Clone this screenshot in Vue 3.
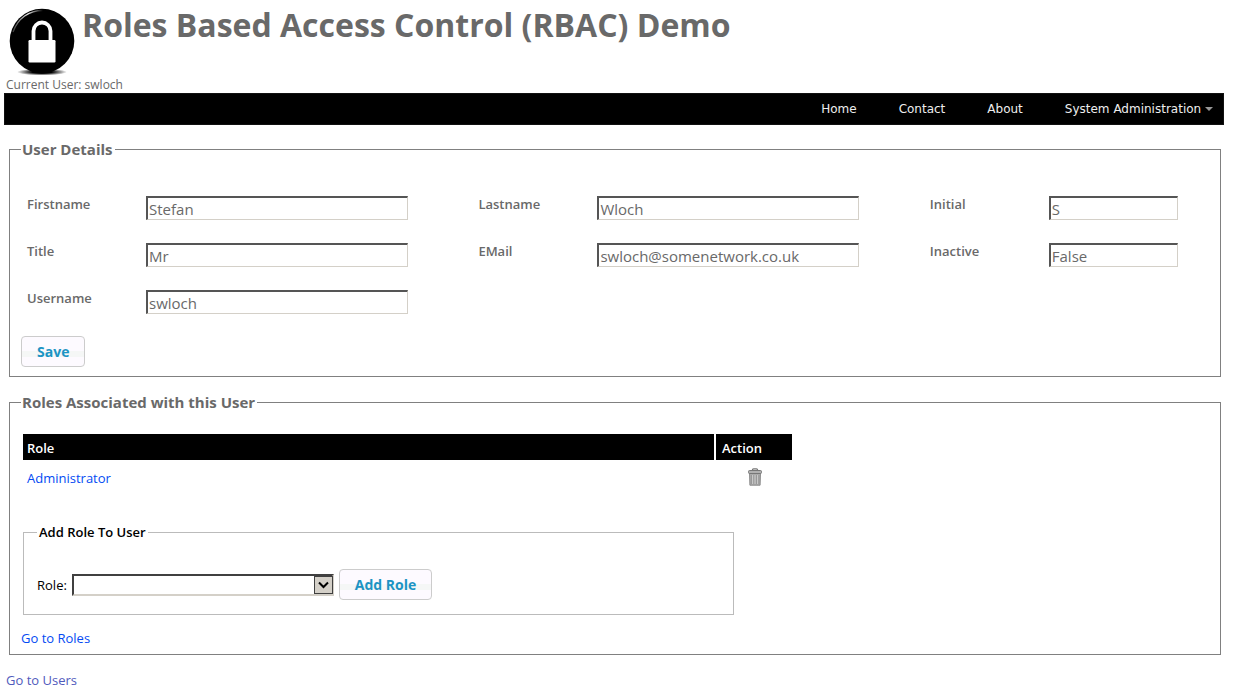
<script setup>
import { ref } from 'vue'

const menu = ['Home', 'Contact', 'About']
const fields = ref([
  { id: 'firstname', label: 'Firstname', value: 'Stefan' },
  { id: 'lastname', label: 'Lastname', value: 'Wloch' },
  { id: 'initial', label: 'Initial', value: 'S', short: true },
  { id: 'title', label: 'Title', value: 'Mr' },
  { id: 'email', label: 'EMail', value: 'swloch@somenetwork.co.uk' },
  { id: 'inactive', label: 'Inactive', value: 'False', short: true },
  { id: 'username', label: 'Username', value: 'swloch' },
])
const role = ref('')
</script>

<template>
  <div class="page">
    <header class="banner">
      <svg class="logo" viewBox="0 0 66 68" aria-hidden="true">
        <defs>
          <radialGradient id="shade">
            <stop offset="0.4" stop-color="#000" />
            <stop offset="1" stop-color="#000" stop-opacity="0" />
          </radialGradient>
          <linearGradient id="gloss" x1="0" y1="0" x2="1" y2="0">
            <stop offset="0" stop-color="#fff" stop-opacity="0.25" />
            <stop offset="0.5" stop-color="#fff" stop-opacity="0.9" />
            <stop offset="1" stop-color="#fff" stop-opacity="0" />
          </linearGradient>
        </defs>
        <ellipse cx="33" cy="64" rx="25" ry="3.500" fill="url(#shade)" />
        <circle cx="33" cy="33" r="32.300" fill="#000" />
        <path d="M4 24C9 10 20 2.500 34 2.500" fill="none" stroke="url(#gloss)" stroke-width="1.300" />
        <path d="M24.500 34V23a8.500 8.500 0 0 1 17 0v11" fill="none" stroke="#fff" stroke-width="3.800" />
        <rect x="19.500" y="32" width="27" height="22.500" rx="1.200" fill="#fff" />
      </svg>
      <h1>Roles Based Access Control (RBAC) Demo</h1>
    </header>
    <p class="current">Current User: swloch</p>

    <nav class="menu">
      <a v-for="item in menu" :key="item" href="#">{{ item }}</a>
      <a href="#" class="more">System Administration
        <svg class="caret" viewBox="0 0 8 4" aria-hidden="true"><path d="M0 0h8L4 4z" fill="#999" /></svg>
      </a>
    </nav>

    <main>
      <fieldset class="group">
        <legend>User Details</legend>
        <div class="fields">
          <template v-for="f in fields" :key="f.id">
            <label :for="f.id">{{ f.label }}</label>
            <input :id="f.id" v-model="f.value" type="text" :class="{ short: f.short }" />
          </template>
        </div>
        <button type="button" class="save">Save</button>
      </fieldset>

      <fieldset class="group roles">
        <legend>Roles Associated with this User</legend>
        <table>
          <thead>
            <tr><th>Role</th><th class="action">Action</th></tr>
          </thead>
          <tbody>
            <tr>
              <td><a href="#">Administrator</a></td>
              <td class="action">
                <button type="button" class="trash" aria-label="Delete role">
                  <svg viewBox="0 0 14 18" aria-hidden="true">
                    <path d="M4.500 2.500V1.800Q4.500 .8 5.500 .8h3q1 0 1 1v.7" fill="none" stroke="#777" stroke-width="1.300" />
                    <path d="M1.500 5h11l-.4 12.200H1.900z" fill="#aaa" stroke="#8c8c8c" />
                    <rect x=".5" y="2.500" width="13" height="3" rx="1" fill="#b0b0b0" stroke="#777" />
                    <path d="M3.500 7v9M6 7v9M8.500 7v9M11 7v9" stroke="#989898" />
                    <path d="M4.500 7v9M7 7v9M9.500 7v9" stroke="#c8c8c8" />
                  </svg>
                </button>
              </td>
            </tr>
          </tbody>
        </table>
        <fieldset class="add">
          <legend>Add Role To User</legend>
          <div class="add-row">
            <label for="role">Role:</label>
            <span class="picker">
              <select id="role" v-model="role"><option value=""></option><option>Administrator</option></select>
              <svg viewBox="0 0 19 18" aria-hidden="true">
                <rect x=".5" y=".5" width="18" height="17" fill="#d4d0c8" stroke="#404040" />
                <path d="M5 6.500l4.500 4.500L14 6.500" fill="none" stroke="#000" stroke-width="2" />
              </svg>
            </span>
            <button type="button">Add Role</button>
          </div>
        </fieldset>
        <a class="go" href="#">Go to Roles</a>
      </fieldset>
      <a class="users" href="#">Go to Users</a>
    </main>
  </div>
</template>

<style>
body {
  margin: 0;
  background: #fff;
}
</style>

<style scoped>
.page,
.page * {
  box-sizing: border-box;
}
.page {
  padding: 8px 12px 0 4px;
  color: #696969;
  font: 13px/18px "Open Sans", "Noto Sans", sans-serif;
}
a {
  color: #034af3;
  text-decoration: none;
}
.banner {
  display: flex;
  gap: 7px;
  height: 68px;
  padding-left: 5px;
}
.logo {
  width: 66px;
  height: 68px;
  flex: none;
}
h1 {
  margin: 0;
  font-size: 32px;
  line-height: 34px;
}
.current {
  margin: 0 0 0 2px;
  padding-top: 1px;
  font-size: 12px;
  line-height: 16px;
}
.menu {
  display: flex;
  justify-content: flex-end;
  gap: 42px;
  height: 32px;
  padding-right: 10px;
  background: #000;
  border: 1px solid #111;
  font: 12px/30px "DejaVu Sans", sans-serif;
}
.menu a {
  color: #eee;
}
.caret {
  width: 8px;
  height: 4px;
  vertical-align: 2px;
}
main {
  padding: 14px 3px 0 5px;
}
fieldset {
  min-width: 0;
  margin: 0;
  border: 1px solid #808080;
}
.group {
  padding: 0 5px 9px 11px;
}
legend {
  padding: 0 2px;
  font-weight: 600;
}
.group > legend {
  padding: 0 2px 0 1px;
  font-size: 15px;
  font-weight: 700;
  line-height: 20px;
}
.fields {
  display: grid;
  grid-template-columns: 119px 2fr 119px 2fr 119px 1fr;
  grid-auto-rows: 24px;
  row-gap: 23px;
  margin: 37px 0 22px 6px;
}
.fields label {
  font-weight: 600;
  line-height: 16px;
}
input {
  width: 262px;
  max-width: 100%;
  height: 24px;
  padding: 0 1px;
  border: 2px solid;
  border-width: 2px 1px 1px 2px;
  border-color: #555 #d4d0c8 #d4d0c8 #555;
  background: #fff;
  color: #696969;
  font: 15px/20px "Open Sans", "Noto Sans", sans-serif;
}
input.short {
  width: 129px;
}
button {
  height: 31px;
  padding: 0 15px;
  border: 1px solid #ccc;
  border-radius: 4px;
  background: linear-gradient(#fdfaff 50%, #f5f7f6 50%, #f5f7f6 70%, #fdfaff 70%);
  color: #1c94c4;
  font: 700 14px/20px "Open Sans", "Noto Sans", sans-serif;
}
.save {
  display: block;
}
.roles {
  margin-top: 15px;
  padding-bottom: 7px;
}
table {
  width: 773px;
  margin-top: 20px;
  border-spacing: 2px;
}
th {
  height: 26px;
  padding: 1px 4px 0;
  background: #000;
  color: #fff;
  font-weight: 600;
  text-align: left;
}
th.action {
  width: 76px;
  padding-left: 6px;
}
td {
  height: 30px;
  padding: 1px 4px 0;
}
td.action {
  padding: 0 3px 2px 5px;
  text-align: center;
}
.trash {
  display: inline-block;
  width: 14px;
  height: 18px;
  padding: 0;
  border: 0;
  background: none;
  vertical-align: middle;
}
.trash svg {
  display: block;
  width: 14px;
  height: 18px;
}
.add {
  width: 711px;
  max-width: 100%;
  margin: 29px 0 0 2px;
  padding: 0 13px 14px;
  border-color: #bbb;
  color: #000;
}
.add legend {
  font-weight: 600;
}
.add-row {
  display: flex;
  align-items: center;
  gap: 5px;
  margin-top: 28px;
}
.picker {
  position: relative;
  width: 262px;
}
select {
  display: block;
  width: 100%;
  height: 22px;
  appearance: none;
  border: 2px solid;
  border-color: #404040 #d4d0c8 #d4d0c8 #404040;
  border-radius: 0;
  background: #fff;
}
.picker svg {
  position: absolute;
  top: 2px;
  right: 1px;
  width: 19px;
  height: 18px;
  pointer-events: none;
}
.go {
  display: block;
  margin-top: 14px;
}
.users {
  display: block;
  margin: 16px 0 0 -3px;
  color: #505abc;
}
</style>
